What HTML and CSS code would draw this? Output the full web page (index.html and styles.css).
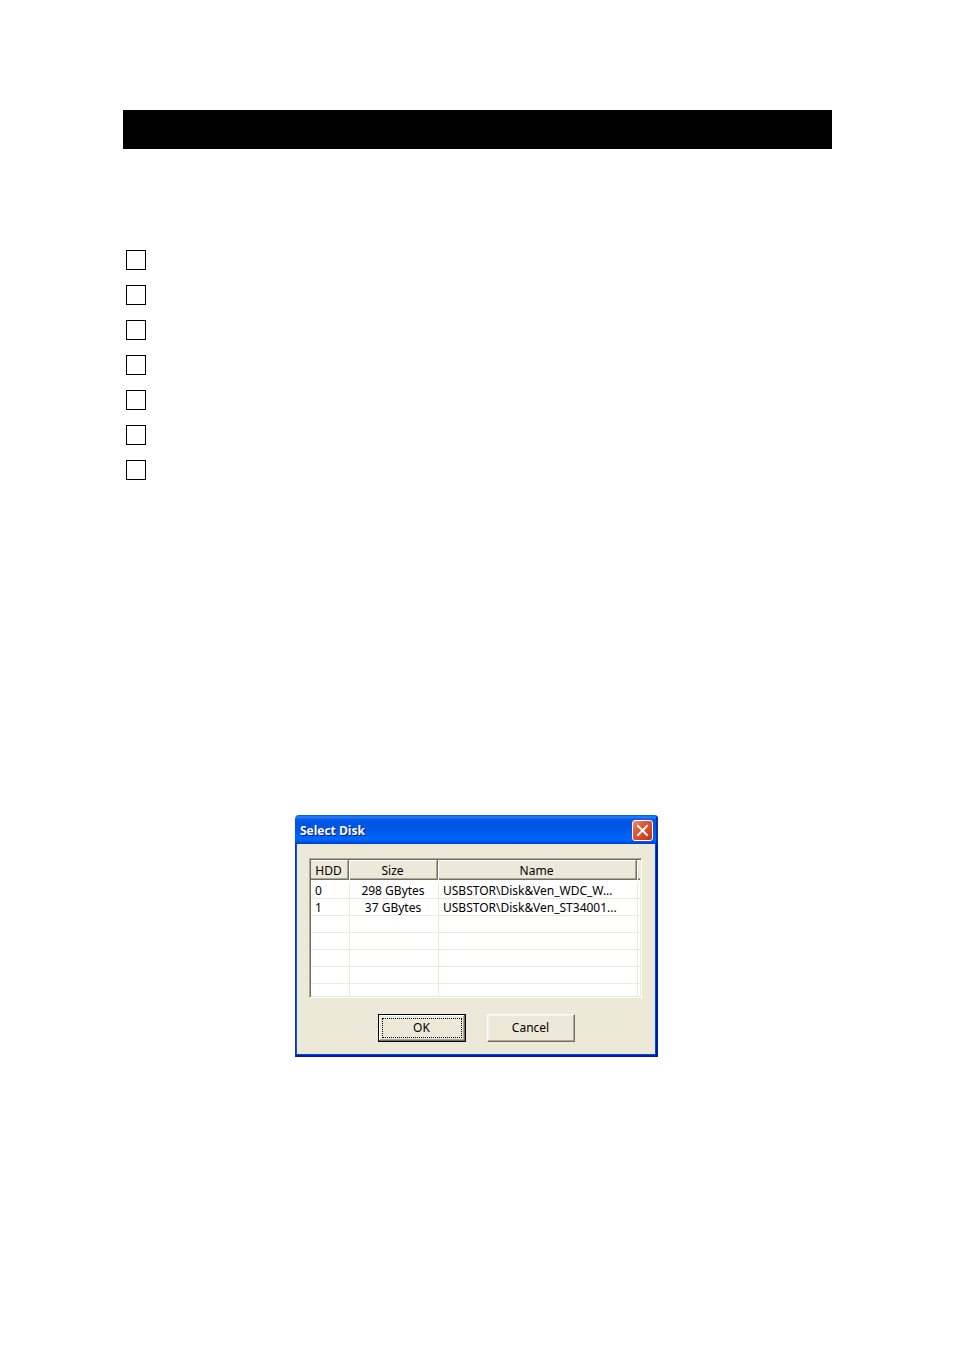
FILE: index.html
```
<!DOCTYPE HTML>
<html lang="en">
	<head>
		<meta charset="utf-8" />
		<title>Select Disk</title>
		<link rel="stylesheet" href="styles.css">
	</head>
	<body>
		<div class="page">
			<div class="banner"></div>
			<ul class="checklist">
				<li><input type="checkbox" aria-label="Item 1"></li>
				<li><input type="checkbox" aria-label="Item 2"></li>
				<li><input type="checkbox" aria-label="Item 3"></li>
				<li><input type="checkbox" aria-label="Item 4"></li>
				<li><input type="checkbox" aria-label="Item 5"></li>
				<li><input type="checkbox" aria-label="Item 6"></li>
				<li><input type="checkbox" aria-label="Item 7"></li>
			</ul>
			<div class="figure">
				<div class="dialog" role="dialog" aria-labelledby="dialog-title">
					<div class="titlebar">
						<h1 id="dialog-title">Select Disk</h1>
						<button type="button" class="close" aria-label="Close">
							<svg width="19" height="19" viewBox="0 0 19 19"><path d="M5 5L14 14M14 5L5 14" stroke="#fff" stroke-width="2" stroke-linecap="square" /></svg>
						</button>
					</div>
					<div class="content">
						<div class="list">
							<table>
								<colgroup>
									<col class="col-hdd">
									<col class="col-size">
									<col class="col-name">
									<col>
								</colgroup>
								<thead>
									<tr><th>HDD</th><th>Size</th><th>Name</th><th></th></tr>
								</thead>
								<tbody>
									<tr><td>0</td><td class="size">298 GBytes</td><td>USBSTOR\Disk&amp;Ven_WDC_W...</td><td></td></tr>
									<tr><td>1</td><td class="size">37 GBytes</td><td>USBSTOR\Disk&amp;Ven_ST34001...</td><td></td></tr>
									<tr><td></td><td></td><td></td><td></td></tr>
									<tr><td></td><td></td><td></td><td></td></tr>
									<tr><td></td><td></td><td></td><td></td></tr>
									<tr><td></td><td></td><td></td><td></td></tr>
									<tr><td></td><td></td><td></td><td></td></tr>
								</tbody>
							</table>
						</div>
						<div class="buttons">
							<button type="button" class="btn default"><span>OK</span></button>
							<button type="button" class="btn">Cancel</button>
						</div>
					</div>
				</div>
			</div>
		</div>
	</body>
</html>
```
FILE: styles.css
```
*{box-sizing: border-box;}
body,h1,ul{margin:0;padding:0;}
ul{list-style: none;}
body{
	background:#fff;
	color:#000;
	font-family: "Noto Sans", "DejaVu Sans", sans-serif;
	font-size: 12px;
}

.page{
	padding:110px 122px 40px 123px;
}
.banner{
	height:39px;
	background:#000;
}

.checklist{
	display: flex;
	flex-direction: column;
	gap:15px;
	padding:101px 3px 0;
}
.checklist li{
	display: flex;
}
.checklist input{
	appearance: none;
	width:20px;
	height:20px;
	margin:0;
	border:1px solid #000;
	background:#fff;
}
.checklist input:checked{
	background:#000;
	box-shadow: inset 0 0 0 4px #fff;
}

.figure{
	display: flex;
	justify-content: center;
	padding:335px 2px 0 0;
}
.dialog{
	width:100%;
	max-width:363px;
	border-radius: 4px 4px 0 0;
	overflow: hidden;
	background:#ece9d8;
}
.titlebar{
	display: flex;
	align-items: center;
	justify-content: space-between;
	height:29px;
	padding:2px 5px 0;
	background:linear-gradient(#0a4fd0 0, #2a80fb 2px, #0660ee 4px, #0054e3 8px, #0058ec 16px, #0066ff 24px, #005cf5 26px, #003dc0 29px);
	box-shadow: inset -2px 0 #0530b0;
}
.titlebar h1{
	color:#fff;
	font-family: "Open Sans", sans-serif;
	font-size: 12px;
	font-weight: 700;
	line-height: 20px;
	text-shadow: 1px 1px #0a1883;
}
.close{
	display: flex;
	width:21px;
	height:21px;
	padding:0;
	border:1px solid #fff;
	border-radius: 3px;
	background:linear-gradient(135deg, #eb9378 0, #e0593a 35%, #d9431f 70%, #b93112 100%);
}

.content{
	padding:14px 14px 13px 13px;
	border:solid #001ea0;
	border-width:0 2px 2px 1px;
	border-left-color:#0831d9;
	box-shadow: inset 1px 0 #0855dd, inset -1px -1px #0046e5;
}
.list{
	height:140px;
	overflow: hidden;
	padding:1px;
	border:1px solid;
	border-color:#aca899 #fff #fff #aca899;
	background:#fff;
	box-shadow: inset 1px 1px #716f64, inset -1px -1px #ece9d8;
}
table{
	width:100%;
	table-layout: fixed;
	border-collapse: separate;
	border-spacing: 0;
}
.col-hdd{width:39px;}
.col-size{width:89px;}
.col-name{width:199px;}
th{
	height:22px;
	padding:0 3px 0 0;
	border:solid #fff;
	border-width:0 1px 2px 0;
	background:#ece9d8;
	background-clip: padding-box;
	box-shadow: inset -1px -1px #716f64, inset 0 1px #fff, inset -2px -2px #aca899;
	font-weight: 400;
	line-height: 17px;
}
td{
	height:17px;
	padding:1px 4px 0;
	border-right:1px solid #ece9d8;
	border-bottom:1px solid #ece9d8;
	line-height: 15px;
	white-space: nowrap;
}
td:last-child,th:last-child{
	padding:0;
	border-right:0;
}
th:last-child{
	box-shadow: inset 0 -1px #716f64, inset 0 1px #fff, inset 0 -2px #aca899;
}
td.size{
	padding:1px 2px 0 0;
	text-align: center;
}

.buttons{
	display: flex;
	justify-content: center;
	gap:21px;
	padding:16px 0 0 1px;
}
.btn{
	width:88px;
	height:28px;
	padding:0;
	border:1px solid;
	border-color:#fff #716f64 #716f64 #fff;
	background:#ece9d8;
	box-shadow: inset -1px -1px #aca899, inset 1px 1px #f5f3ea;
	color:#000;
	font-family: inherit;
	font-size: 12px;
	line-height: 18px;
}
.default{
	padding:3px;
	border-color:#000;
	box-shadow: inset -1px -1px #716f64, inset 1px 1px #fff, inset -2px -2px #aca899;
}
.default span{
	display: block;
	border:1px dotted #000;
}
```
